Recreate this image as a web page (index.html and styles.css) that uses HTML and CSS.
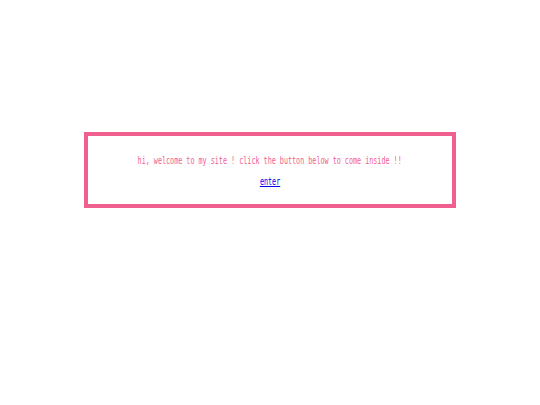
FILE: index.html
```html
<!DOCTYPE html>
<html>
<head>
<meta charset="utf-8">
<link rel="stylesheet" href="styles.css">
</head>
<body>
<div class="box">
  <p class="msg"><span class="squeeze">hi, welcome to my site ! click the button below to come inside !!</span></p>
  <p class="enter"><a class="squeeze" href="#">enter</a></p>
</div>
</body>
</html>
```
FILE: styles.css
```css
html, body {
  margin: 0;
  background: #ffffff;
}
.box {
  box-sizing: border-box;
  width: 372px;
  margin: 132px auto 0;
  border: 4px solid #f0608e;
  padding: 19px 0 16px;
  text-align: center;
  font-family: "DejaVu Sans Mono", monospace;
  font-size: 10px;
  line-height: 12px;
}
.msg {
  display: flex;
  justify-content: center;
  margin: 0 0 9px;
  color: #f0608e;
  white-space: nowrap;
}
.enter {
  display: flex;
  justify-content: center;
  margin: 0;
}
.squeeze {
  display: inline-block;
  flex: none;
  transform: scaleX(0.675);
  white-space: nowrap;
}
.enter a {
  color: #0000ee;
  text-decoration: underline;
}
```
